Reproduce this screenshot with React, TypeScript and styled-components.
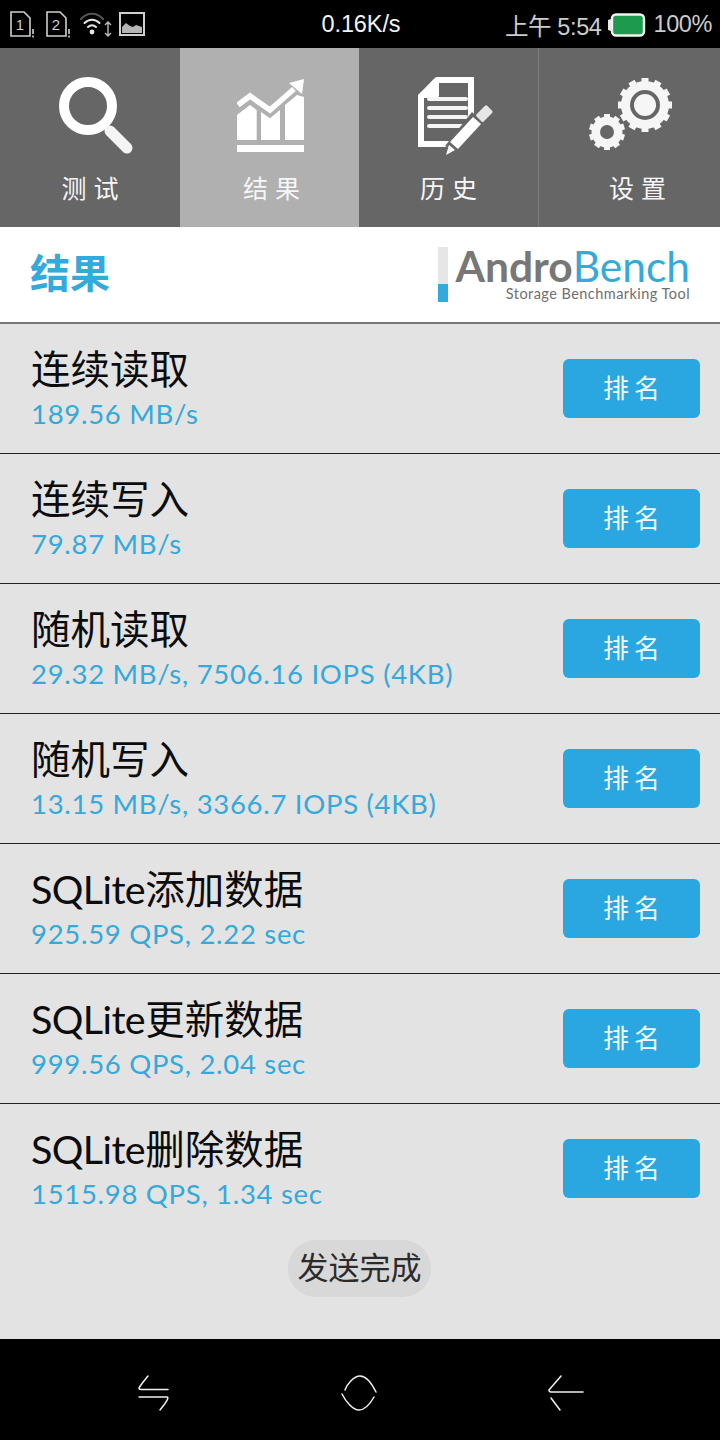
import React, { ReactElement, ReactNode } from 'react'
import styled, { createGlobalStyle } from 'styled-components'

const GlobalStyle = createGlobalStyle`
  html, body {
    margin: 0;
    padding: 0;
    background: #e3e3e3;
  }
  * {
    box-sizing: border-box;
  }
`

const CJK = '"Noto Sans CJK SC", sans-serif'
const BLUE = '#33a9dc'

const Page = styled.div`
  position: relative;
  width: 720px;
  height: 1440px;
  overflow: hidden;
  display: flex;
  flex-direction: column;
  background: #e3e3e3;
  font-family: Lato, ${CJK};
`

const StatusBar = styled.div`
  height: 48px;
  flex: none;
  background: #000;
  display: grid;
  grid-template-columns: 1fr auto 1fr;
  align-items: center;
  padding: 0 8px 0 10px;
  color: #cccccc;
  font-family: "Liberation Sans", ${CJK};
`

const StatusLeft = styled.div`
  display: flex;
  align-items: center;
`

const Speed = styled.div`
  color: #f4f4f4;
  font-size: 23.5px;
  letter-spacing: -0.1px;
`

const StatusRight = styled.div`
  display: flex;
  align-items: center;
  justify-content: flex-end;
  font-size: 23.5px;
  gap: 7px;
  letter-spacing: -0.4px;
  padding-top: 1px;
`

const Tabs = styled.div`
  height: 179px;
  flex: none;
  display: grid;
  grid-template-columns: 180px 179px 180px 181px;
`

const Tab = styled.div<{ $active?: boolean; $divider?: boolean; $shift?: number }>`
  background: ${p => (p.$active ? '#b0b0b0' : '#666666')};
  border-right: ${p => (p.$divider ? '1px solid #7d7d7d' : 'none')};
  display: flex;
  flex-direction: column;
  align-items: center;
  color: #f6f6f6;
  padding-top: 26px;
  padding-left: ${p => p.$shift ?? 0}px;
`

const TabIcon = styled.div<{ $nudge?: number }>`
  height: 84px;
  display: flex;
  align-items: center;
  justify-content: center;
  margin-left: ${p => p.$nudge ?? 0}px;
`

const TabLabel = styled.div`
  font-family: ${CJK};
  font-size: 25px;
  font-weight: 400;
  letter-spacing: 7px;
  line-height: 36px;
  margin-top: 11px;
  margin-right: -7px;
`

const Header = styled.div`
  height: 97px;
  flex: none;
  background: #fff;
  border-bottom: 2px solid #777;
  display: flex;
  align-items: center;
  justify-content: space-between;
  padding: 0 30px 2px 30px;
`

const PageTitle = styled.div`
  font-family: ${CJK};
  font-size: 40px;
  font-weight: 700;
  color: ${BLUE};
  margin-top: -6px;
`

const Logo = styled.div`
  display: flex;
  align-items: stretch;
  gap: 7px;
  height: 55px;
  margin-top: 2px;
`

const LogoBar = styled.div`
  width: 10px;
  background: linear-gradient(#e6e6e6 0 37px, ${BLUE} 37px);
`

const LogoText = styled.div`
  display: flex;
  flex-direction: column;
  align-items: flex-end;
`

const LogoName = styled.div`
  font-size: 42.5px;
  line-height: 38px;
  color: ${BLUE};
`

const LogoStrong = styled.span`
  color: #777;
  font-weight: 700;
`

const LogoTag = styled.div`
  font-size: 14.5px;
  line-height: 18px;
  color: #6f6f6f;
  letter-spacing: 0.45px;
`

const List = styled.div`
  display: flex;
  flex-direction: column;
`

const Row = styled.div<{ $last?: boolean }>`
  height: 130px;
  flex: none;
  display: flex;
  align-items: center;
  justify-content: space-between;
  padding: 0 20px 0 31px;
  border-bottom: 1px solid ${p => (p.$last ? 'transparent' : '#222')};
`

const RowText = styled.div`
  display: flex;
  flex-direction: column;
  margin-top: -6px;
`

const RowTitle = styled.div`
  font-size: 39.5px;
  line-height: 56px;
  color: #0c0c0c;
  margin-top: -1px;
  margin-bottom: 1px;
`

const RowLatin = styled.span`
  letter-spacing: -0.6px;
`

const RowValue = styled.div`
  font-size: 27.5px;
  line-height: 32px;
  color: ${BLUE};
  letter-spacing: 0.7px;
`

const RankButton = styled.div`
  width: 137px;
  height: 59px;
  background: #2aa6e0;
  border-radius: 6px;
  color: #eefaff;
  font-family: ${CJK};
  font-size: 26px;
  letter-spacing: 5px;
  padding: 0 0 4px 5px;
  display: flex;
  align-items: center;
  justify-content: center;
`

const Toast = styled.div`
  position: absolute;
  left: 288px;
  top: 1240px;
  width: 143px;
  height: 57px;
  border-radius: 28px;
  background: #d8d8d8;
  color: #2b2b2b;
  font-family: ${CJK};
  font-size: 31px;
  padding-bottom: 7px;
  display: flex;
  align-items: center;
  justify-content: center;
  white-space: nowrap;
`

const NavBar = styled.div`
  position: absolute;
  left: 0;
  right: 0;
  bottom: 0;
  height: 101px;
  background: #000;
  display: grid;
  grid-template-columns: 308px 104px 308px;
`

const NavCell = styled.div`
  display: flex;
  align-items: center;
  justify-content: center;
  padding-top: 6px;
`

const SimIcon = ({ n, gap }: { n: string; gap: number }): ReactElement => (
  <svg width="26" height="28" viewBox="0 0 26 28" style={{ marginRight: gap }}>
    <path d="M1 2h13l6 6v18H1z" fill="none" stroke="#cfcfcf" strokeWidth="1.6" />
    <text x="10" y="20" fontSize="15" fontFamily="Liberation Sans" fill="#cfcfcf" textAnchor="middle">{n}</text>
    <path d="M23 19v5M23 25.5v2" stroke="#cfcfcf" strokeWidth="1.6" />
  </svg>
)

const WifiIcon = (): ReactElement => (
  <svg width="32" height="26" viewBox="0 0 32 26" style={{ marginRight: 7 }}>
    <g fill="none" strokeLinecap="round">
      <path d="M1 8C7 1 17 1 23 8" stroke="#555" strokeWidth="2" />
      <path d="M4.500 12C9 7.500 15 7.500 19.500 12" stroke="#e6e6e6" strokeWidth="2" />
      <path d="M8 16C10.500 13.500 13.500 13.500 16 16" stroke="#e6e6e6" strokeWidth="2" />
    </g>
    <circle cx="12" cy="21" r="2.4" fill="#e6e6e6" />
    <path d="M28 11v14M25 14l3-3 3 3M25 22l3 3 3-3" fill="none" stroke="#bbb" strokeWidth="1.4" />
  </svg>
)

const PictureIcon = (): ReactElement => (
  <svg width="26" height="24" viewBox="0 0 26 24">
    <rect x="1" y="1" width="24" height="22" fill="none" stroke="#cfcfcf" strokeWidth="2" />
    <path d="M3 21v-6l4-4 4 3 3 1 3-2 3 1 3 1v6z" fill="#b5b5b5" />
  </svg>
)

const BatteryIcon = (): ReactElement => (
  <svg width="38" height="24" viewBox="0 0 38 24">
    <path d="M0 7l3-1v12l-3-1z" fill="#e8e8e8" />
    <rect x="4" y="1.500" width="32" height="21" rx="4" fill="#1d9a4e" stroke="#f2f2f2" strokeWidth="2.4" />
  </svg>
)

const SearchIcon = (): ReactElement => (
  <svg width="76" height="78" viewBox="0 0 76 78">
    <circle cx="29" cy="29" r="24" fill="none" stroke="#fff" strokeWidth="10" />
    <path d="M51 54l17 17" stroke="#f4f4f4" strokeWidth="11" strokeLinecap="round" />
  </svg>
)

const ChartIcon = (): ReactElement => (
  <svg width="68" height="76" viewBox="0 0 68 76">
    <path d="M0 37L13 27l6.700 5V62H0z" fill="#fff" />
    <path d="M24 34l9 6.300L43 32V62H24z" fill="#fff" />
    <path d="M48 27L60 17l7 2V62H48z" fill="#fff" />
    <path d="M1 27L13 18l20 14L57 11" fill="none" stroke="#fff" strokeWidth="5.500" />
    <path d="M52 5l15-4-2 15z" fill="#fff" />
    <path d="M0 67h67v7H0z" fill="#fff" />
  </svg>
)

const HistoryIcon = (): ReactElement => (
  <svg width="76" height="80" viewBox="0 0 76 80">
    <path d="M18 1h38v50H50V7H21v12a3 3 0 0 1-3 3H6v43h28v6H0V19z" fill="#fff" />
    <path d="M16 3v14H3z" fill="#fff" />
    <path d="M11 23h37M11 32h37M11 41h37M11 50h37" stroke="#f4f4f4" strokeWidth="4" strokeLinecap="round" />
    <path d="M27 70L54 36l14 12-27 29z" fill="#666" />
    <path d="M32 66L55 41l8 7-23 25z" fill="#fff" />
    <path d="M28 79l3-10 6 5z" fill="#fff" />
    <rect x="59" y="33" width="15" height="10" rx="1.500" transform="rotate(-45 66 38)" fill="#e6e6e6" />
  </svg>
)

const gear = (cx: number, cy: number, r: number, teeth: number, w: number, h: number): ReactNode =>
  Array.from({ length: teeth }, (_, i) => (
    <rect
      key={i}
      x={cx - w / 2}
      y={cy - r - h}
      width={w}
      height={h + 3}
      fill="#f6f6f6"
      transform={`rotate(${(360 / teeth) * i} ${cx} ${cy})`}
    />
  ))

const GearsIcon = (): ReactElement => (
  <svg width="86" height="78" viewBox="0 0 86 78">
    {gear(57, 28, 24, 12, 7, 3)}
    <circle cx="57" cy="28" r="24" fill="#f6f6f6" />
    <circle cx="57" cy="28" r="15" fill="#666" />
    <circle cx="57" cy="28" r="11" fill="#f6f6f6" />
    {gear(19, 55, 15, 10, 6, 3)}
    <circle cx="19" cy="55" r="15.500" fill="#f6f6f6" />
    <circle cx="19" cy="55" r="7" fill="#666" />
  </svg>
)

const NavSwitch = (): ReactElement => (
  <svg width="40" height="40" viewBox="0 0 40 40" fill="none" stroke="#f0f0f0" strokeWidth="1.5" strokeLinecap="round">
    <path d="M14 3C10 8 7 11 5 15c0 1 .5 1.500 2 1.500h27" />
    <path d="M5 24h28c1 0 1 1 .6 2-1.600 4-4.600 7-7.600 11" />
  </svg>
)

const NavHome = (): ReactElement => (
  <svg width="40" height="40" viewBox="0 0 40 40" fill="none" stroke="#f0f0f0" strokeWidth="1.5" strokeLinecap="round">
    <path d="M5 17C7 11 14 3 20 3s12 8 16 16" />
    <path d="M2 21c4 8 11 16 17 16s11-6 15-13" />
  </svg>
)

const NavBack = (): ReactElement => (
  <svg width="40" height="40" viewBox="0 0 40 40" fill="none" stroke="#f0f0f0" strokeWidth="1.5" strokeLinecap="round">
    <path d="M15 3C11 8 7 12 3 17c0 1 .5 2 2 2h32" />
    <path d="M5 25l9 12" />
  </svg>
)

const rows = [
  { title: '连续读取', value: '189.56 MB/s' },
  { title: '连续写入', value: '79.87 MB/s' },
  { title: '随机读取', value: '29.32 MB/s, 7506.16 IOPS (4KB)' },
  { title: '随机写入', value: '13.15 MB/s, 3366.7 IOPS (4KB)' },
  { latin: 'SQLite', title: '添加数据', value: '925.59 QPS, 2.22 sec' },
  { latin: 'SQLite', title: '更新数据', value: '999.56 QPS, 2.04 sec' },
  { latin: 'SQLite', title: '删除数据', value: '1515.98 QPS, 1.34 sec' }
]

const App = (): ReactElement => {
  return (
    <Page>
      <GlobalStyle />
      <StatusBar>
        <StatusLeft>
          <SimIcon n="1" gap={10} />
          <SimIcon n="2" gap={8} />
          <WifiIcon />
          <PictureIcon />
        </StatusLeft>
        <Speed>0.16K/s</Speed>
        <StatusRight>
          <span>上午 5:54</span>
          <BatteryIcon />
          <span>100%</span>
        </StatusRight>
      </StatusBar>
      <Tabs>
        <Tab>
          <TabIcon $nudge={14}><SearchIcon /></TabIcon>
          <TabLabel>测试</TabLabel>
        </Tab>
        <Tab $active $shift={4}>
          <TabIcon $nudge={-2}><ChartIcon /></TabIcon>
          <TabLabel>结果</TabLabel>
        </Tab>
        <Tab $divider>
          <TabIcon $nudge={14}><HistoryIcon /></TabIcon>
          <TabLabel>历史</TabLabel>
        </Tab>
        <Tab $shift={16}>
          <TabIcon $nudge={-14}><GearsIcon /></TabIcon>
          <TabLabel>设置</TabLabel>
        </Tab>
      </Tabs>
      <Header>
        <PageTitle>结果</PageTitle>
        <Logo>
          <LogoBar />
          <LogoText>
            <LogoName><LogoStrong>Andro</LogoStrong>Bench</LogoName>
            <LogoTag>Storage Benchmarking Tool</LogoTag>
          </LogoText>
        </Logo>
      </Header>
      <List>
        {rows.map((row, i) => (
          <Row key={row.value} $last={i === rows.length - 1}>
            <RowText>
              <RowTitle>{row.latin && <RowLatin>{row.latin}</RowLatin>}{row.title}</RowTitle>
              <RowValue>{row.value}</RowValue>
            </RowText>
            <RankButton>排名</RankButton>
          </Row>
        ))}
      </List>
      <Toast>发送完成</Toast>
      <NavBar>
        <NavCell><NavSwitch /></NavCell>
        <NavCell><NavHome /></NavCell>
        <NavCell><NavBack /></NavCell>
      </NavBar>
    </Page>
  )
}

export default App
